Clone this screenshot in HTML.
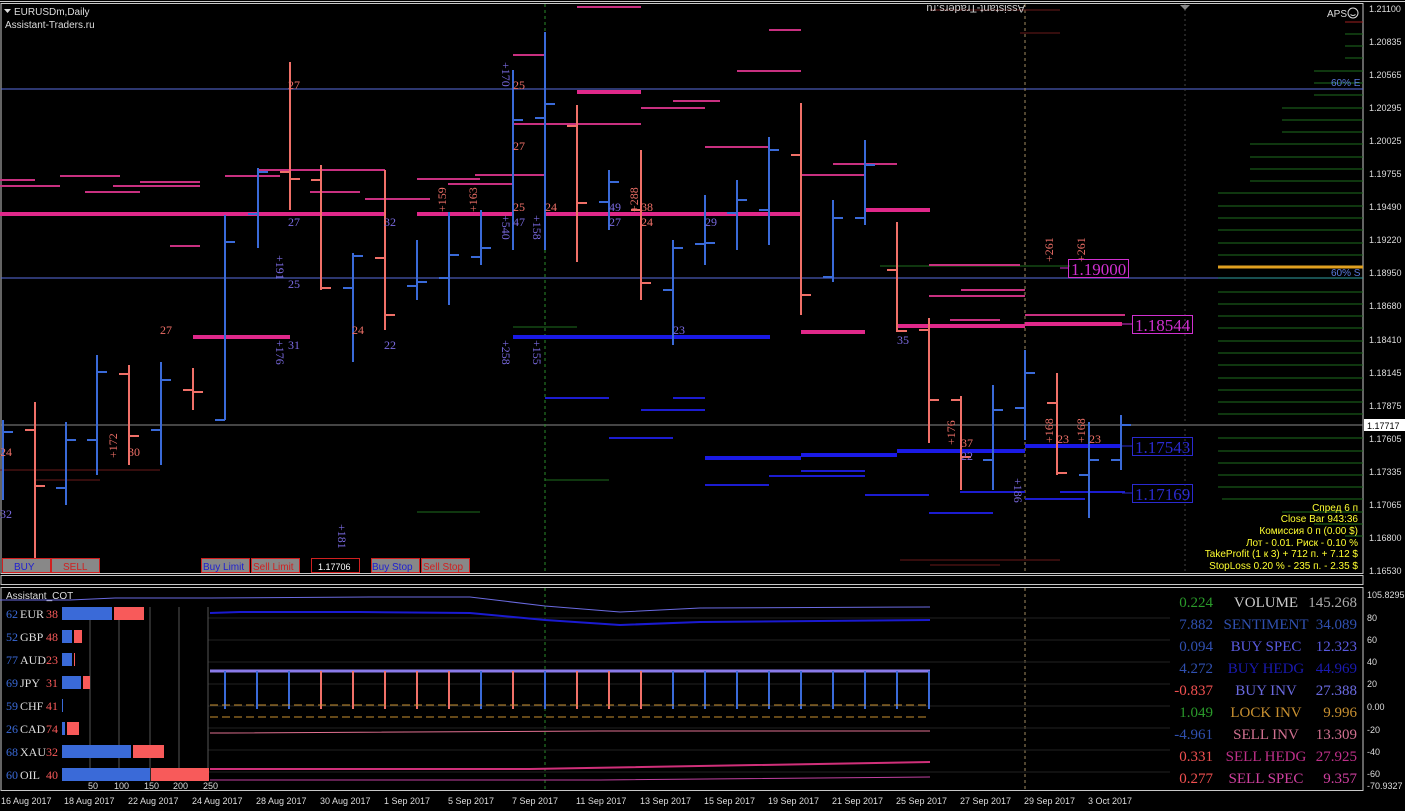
<!DOCTYPE html>
<html><head><meta charset="utf-8"><style>
html,body{margin:0;padding:0;background:#000;width:1405px;height:811px;overflow:hidden}
svg{display:block}
</style></head><body>
<svg width="1405" height="811" viewBox="0 0 1405 811" xmlns="http://www.w3.org/2000/svg" font-family="Liberation Sans, sans-serif">
<rect width="1405" height="811" fill="#000"/>
<rect x="1" y="3.5" width="1362" height="570" fill="none" stroke="#c8c8c8" stroke-width="1"/>
<rect x="1" y="575.5" width="1362" height="9" fill="none" stroke="#c8c8c8"/>
<rect x="1" y="587.5" width="1362" height="203" fill="none" stroke="#c8c8c8"/>
<line x1="0" y1="1.5" x2="1405" y2="1.5" stroke="#c8c8c8"/>
<line x1="1" y1="89" x2="1363" y2="89" stroke="#5a6ee0"/>
<line x1="1" y1="278" x2="1363" y2="278" stroke="#5a6ee0"/>
<line x1="1" y1="425" x2="1363" y2="425" stroke="#8a8a8a"/>
<line x1="545" y1="4" x2="545" y2="573" stroke="#2a8a2a" stroke-dasharray="3,3"/>
<line x1="1025" y1="4" x2="1025" y2="573" stroke="#a08a60" stroke-dasharray="3,3"/>
<line x1="1185" y1="4" x2="1185" y2="573" stroke="#444" stroke-dasharray="2,3"/>
<line x1="545" y1="588" x2="545" y2="790" stroke="#2a8a2a" stroke-dasharray="3,3"/>
<line x1="1025" y1="588" x2="1025" y2="790" stroke="#a08a60" stroke-dasharray="3,3"/>
<g stroke="#1e6e1e">
<path d="M1345 34H1363M1345 46H1363M1345 58H1363M1314 71H1363M1314 83H1363M1314 95H1363M1282 108H1363M1282 120H1363M1282 132H1363M1250 144H1363M1250 157H1363M1250 169H1363M1250 181H1363M1218 193H1363M1218 206H1363M1218 218H1363M1218 230H1363M1218 243H1363M1218 255H1363M1218 292H1363M1218 304H1363M1218 316H1363M1218 328H1363M1218 341H1363M1218 353H1363M1218 365H1363M1218 378H1363M1218 390H1363M1218 402H1363M1218 414H1363M1218 438H1363M1218 451H1363M1218 463H1363M1218 475H1363M1218 487H1363M1222 499H1363M1282 512H1363M1314 524H1363M1345 536H1363"/>
<path d="M417 512H480M513 327H577M545 480H609M880 266H1070"/>
</g>
<line x1="1218" y1="267" x2="1363" y2="267" stroke="#e0a020" stroke-width="3"/>
<line x1="1218" y1="278" x2="1363" y2="278" stroke="#30a0a0"/>
<line x1="1345" y1="22" x2="1363" y2="22" stroke="#a02020"/>
<text x="1331" y="86" font-size="10" fill="#5a7ae0">60% E</text>
<text x="1331" y="276" font-size="10" fill="#5a7ae0">60% S</text>
<g stroke="#6a1a1a"><path d="M0 470H160M35 480H100M930 10H1060M1020 33H1060M900 560H1060M930 565H1000"/></g>
<g stroke="#c83080" stroke-width="2">
<path d="M0 180H35M0 186H60M60 176H120M85 192H140M113 186H200M140 182H200M170 246H200M225 176H280M258 170H310M290 170H385M310 192H360M365 199H430M417 179H480M448 184H513M475 175H545M513 55H545M513 124H609M545 124H641M577 7H641M641 108H705M673 101H720M705 147H769M737 71H801M769 30H801M801 175H865M833 164H897M929 296H1025M961 290H1025M1025 315H1125M929 265H1020M950 320H1000"/>
</g>
<g stroke="#e0288a" stroke-width="4">
<path d="M0 214H227M225 214H385M417 214H513M545 214H641M641 214H801M865 210H930M577 92H641M193 337H290M801 332H865M897 326H1025M1025 324H1122"/>
</g>
<g stroke="#1a1ae6" stroke-width="4">
<path d="M513 337H770M705 458H801M801 455H897M897 451H1025M1025 446H1122"/>
</g>
<g stroke="#1c1cd0" stroke-width="2">
<path d="M545 398H609M641 410H705M609 438H673M673 398H705M705 485H769M769 476H865M865 495H929M929 513H993M960 492H1025M1025 499H1085M1060 492H1125M801 471H865"/>
</g>
<g stroke="#3a6ad8" stroke-width="2" fill="none">
<path d="M3 420V500M3 432H13M66 422V505M56 488H66M66 440H76M97 355V475M97 440H87M97 372H107M161 362V465M151 430H161M161 380H171M225 215V420M215 420H225M225 242H235M258 168V248M248 214H258M258 172H268M353 253V362M343 288H353M353 256H363M417 240V300M407 286H417M417 282H427M449 212V305M439 278H449M449 255H459M481 210V265M471 257H481M481 248H491M513 70V250M513 120H523M545 32V250M535 118H545M545 104H555M609 170V230M599 202H609M609 182H619M673 240V345M663 290H673M673 248H683M705 195V265M695 244H705M705 243H715M737 180V250M727 213H737M737 200H747M769 137V245M759 210H769M769 150H779M833 200V282M823 277H833M833 218H843M865 140V225M855 218H865M865 165H875M993 385V490M983 460H993M993 410H1003M1025 350V440M1015 408H1025M1025 373H1035M1089 422V518M1079 475H1089M1089 460H1099M1121 415V470M1111 460H1121M1121 425H1131"/>
</g>
<g stroke="#f07068" stroke-width="2" fill="none">
<path d="M35 402V560M25 430H35M35 486H45M129 365V465M119 374H129M129 436H139M193 368V410M183 390H193M193 392H203M290 62V210M280 172H290M290 179H300M321 165V290M311 180H321M321 288H331M385 170V330M375 258H385M385 315H395M577 105V262M567 126H577M577 203H587M641 150V300M631 210H641M641 283H651M801 103V315M791 155H801M801 295H811M897 222V332M887 270H897M897 331H907M929 318V443M919 330H929M929 400H939M961 396V490M951 400H961M961 457H971M1057 373V475M1047 403H1057M1057 473H1067"/>
</g>
<g font-size="12" font-family="Liberation Serif, serif">
<text x="0" y="456" fill="#f07068">24</text>
<text x="0" y="518" fill="#7a6ae0">32</text>
<text x="128" y="456" fill="#f07068">30</text>
<text x="160" y="334" fill="#f07068">27</text>
<text x="288" y="89" fill="#f07068">27</text>
<text x="288" y="226" fill="#7a6ae0">27</text>
<text x="288" y="288" fill="#7a6ae0">25</text>
<text x="288" y="349" fill="#7a6ae0">31</text>
<text x="352" y="334" fill="#f07068">24</text>
<text x="384" y="226" fill="#7a6ae0">32</text>
<text x="384" y="349" fill="#7a6ae0">22</text>
<text x="513" y="89" fill="#f07068">25</text>
<text x="513" y="150" fill="#f07068">27</text>
<text x="513" y="211" fill="#f07068">25</text>
<text x="513" y="226" fill="#7a6ae0">47</text>
<text x="545" y="211" fill="#f07068">24</text>
<text x="609" y="211" fill="#7a6ae0">49</text>
<text x="609" y="226" fill="#7a6ae0">27</text>
<text x="641" y="211" fill="#f07068">38</text>
<text x="641" y="226" fill="#f07068">24</text>
<text x="673" y="334" fill="#7a6ae0">23</text>
<text x="705" y="226" fill="#7a6ae0">29</text>
<text x="897" y="344" fill="#7a6ae0">35</text>
<text x="961" y="447" fill="#f07068">37</text>
<text x="961" y="460" fill="#7a6ae0">22</text>
<text x="1057" y="443" fill="#f07068">23</text>
<text x="1089" y="443" fill="#f07068">23</text>
</g>
<g font-size="12" font-family="Liberation Serif, serif" fill="#7a6ae0">
<text transform="translate(117,458) rotate(-90)" fill="#f07068">+172</text>
<text transform="translate(276,255) rotate(90)">+191</text>
<text transform="translate(276,340) rotate(90)">+176</text>
<text transform="translate(338,524) rotate(90)">+181</text>
<text transform="translate(446,212) rotate(-90)" fill="#f07068">+159</text>
<text transform="translate(477,212) rotate(-90)" fill="#f07068">+163</text>
<text transform="translate(502,62) rotate(90)">+170</text>
<text transform="translate(502,215) rotate(90)">+540</text>
<text transform="translate(533,215) rotate(90)">+158</text>
<text transform="translate(502,340) rotate(90)">+258</text>
<text transform="translate(533,340) rotate(90)">+155</text>
<text transform="translate(638,212) rotate(-90)" fill="#f07068">+288</text>
<text transform="translate(955,445) rotate(-90)" fill="#f07068">+176</text>
<text transform="translate(1014,478) rotate(90)">+186</text>
<text transform="translate(1053,443) rotate(-90)" fill="#f07068">+168</text>
<text transform="translate(1053,262) rotate(-90)" fill="#f07068">+261</text>
<text transform="translate(1085,443) rotate(-90)" fill="#f07068">+168</text>
<text transform="translate(1085,262) rotate(-90)" fill="#f07068">+261</text>
</g>
<g font-size="17" font-family="Liberation Serif, serif">
<line x1="1060" y1="268" x2="1068" y2="268" stroke="#d030d0"/>
<rect x="1068.5" y="259.5" width="60" height="18" fill="none" stroke="#d030d0"/>
<text x="1071" y="275" fill="#d030d0">1.19000</text>
<line x1="1122" y1="324" x2="1132" y2="324" stroke="#d030d0"/>
<rect x="1132.5" y="315.5" width="60" height="18" fill="none" stroke="#d030d0"/>
<text x="1135" y="331" fill="#d030d0">1.18544</text>
<line x1="1122" y1="446" x2="1132" y2="446" stroke="#2a2ad0"/>
<rect x="1132.5" y="437.5" width="60" height="18" fill="none" stroke="#2a2ad0"/>
<text x="1135" y="453" fill="#2a2ad0">1.17543</text>
<line x1="1122" y1="493" x2="1132" y2="493" stroke="#2a2ad0"/>
<rect x="1132.5" y="484.5" width="60" height="18" fill="none" stroke="#2a2ad0"/>
<text x="1135" y="500" fill="#2a2ad0">1.17169</text>
</g>
<path d="M4 9h7l-3.5 4z" fill="#ddd"/>
<text x="14" y="15" font-size="10" fill="#ddd">EURUSDm,Daily</text>
<text x="5" y="28" font-size="10" fill="#ddd">Assistant-Traders.ru</text>
<text x="1095" y="13" font-size="11" fill="#ccc" transform="rotate(180 1060 9)">Assistant-Traders.ru</text>
<path d="M1180 5h10l-5 5z" fill="#888"/>
<text x="1327" y="17" font-size="10" fill="#ddd">APS</text>
<circle cx="1353" cy="13" r="5" fill="none" stroke="#ddd"/>
<path d="M1350.5 14.5q2.5 2 5 0" stroke="#ddd" fill="none"/>
<g font-size="10" fill="#ffff30" text-anchor="end">
<text x="1358" y="511">Спред 6 п</text>
<text x="1358" y="522">Close Bar    943:36</text>
<text x="1358" y="534">Комиссия 0 п (0.00 $)</text>
<text x="1358" y="546">Лот - 0.01. Риск - 0.10 %</text>
<text x="1358" y="557">TakeProfit (1 к 3) + 712 п. + 7.12 $</text>
<text x="1358" y="569">StopLoss 0.20 % - 235 п. - 2.35 $</text>
</g>
<g font-size="9" fill="#ddd">
<text x="1369" y="12">1.21100</text><text x="1369" y="45">1.20835</text><text x="1369" y="78">1.20565</text><text x="1369" y="111">1.20295</text><text x="1369" y="144">1.20025</text><text x="1369" y="177">1.19755</text><text x="1369" y="210">1.19490</text><text x="1369" y="243">1.19220</text><text x="1369" y="276">1.18950</text><text x="1369" y="309">1.18680</text><text x="1369" y="343">1.18410</text><text x="1369" y="376">1.18145</text><text x="1369" y="409">1.17875</text><text x="1369" y="442">1.17605</text><text x="1369" y="475">1.17335</text><text x="1369" y="508">1.17065</text><text x="1369" y="541">1.16800</text><text x="1369" y="574">1.16530</text>
</g>
<rect x="1364" y="419" width="41" height="12" fill="#fff"/>
<text x="1367" y="429" font-size="9" fill="#000">1.17717</text>
<g font-size="10">
<rect x="2.5" y="558.5" width="48" height="14" fill="#888" stroke="#d02020"/><text x="14" y="570" fill="#2020d0">BUY</text>
<rect x="51.5" y="558.5" width="48" height="14" fill="#888" stroke="#d02020"/><text x="63" y="570" fill="#d02020">SELL</text>
<rect x="201.5" y="558.5" width="48" height="14" fill="#888" stroke="#d02020"/><text x="203" y="570" fill="#2020d0">Buy Limit</text>
<rect x="251.5" y="558.5" width="48" height="14" fill="#888" stroke="#d02020"/><text x="253" y="570" fill="#d02020">Sell Limit</text>
<rect x="311.5" y="558.5" width="48" height="14" fill="#000" stroke="#d02020"/><text x="318" y="570" fill="#fff" font-size="9">1.17706</text>
<rect x="371.5" y="558.5" width="48" height="14" fill="#888" stroke="#d02020"/><text x="372" y="570" fill="#2020d0">Buy Stop</text>
<rect x="421.5" y="558.5" width="48" height="14" fill="#888" stroke="#d02020"/><text x="423" y="570" fill="#d02020">Sell Stop</text>
</g>
<text x="6" y="599" font-size="10" fill="#ddd">Assistant_COT</text>
<g stroke="#222"><path d="M208 618H1170M208 640H1170M208 662H1170M208 684H1170M208 706H1170M208 728H1170M208 750H1170M208 772H1170"/></g>
<g stroke="#555"><path d="M90 607V781M119 607V781M150 607V781M179 607V781M208 607V781"/></g>
<path d="M0 600H70L115 598H210L370 597H470L545 606L620 612L700 608L930 607" stroke="#6a6ae0" fill="none"/>
<path d="M210 613L240 612L360 612L470 613L545 620L620 625L700 622L930 620" stroke="#1a1ad0" stroke-width="2" fill="none"/>
<line x1="210" y1="671" x2="930" y2="671" stroke="#8a7ae8" stroke-width="3"/>
<g stroke-width="2">
<path d="M225 671V709M257 671V709M289 671V709M481 671V709M545 671V709M673 671V709M705 671V709M737 671V709M769 671V709M801 671V709M833 671V709M865 671V709M897 671V709M929 671V709" stroke="#3a6ad8"/>
<path d="M321 671V709M353 671V709M385 671V709M417 671V709M449 671V709M513 671V709M577 671V709M609 671V709M641 671V709" stroke="#f07068"/>
</g>
<path d="M210 705H930M210 717H930" stroke="#c89030" stroke-dasharray="8,4"/>
<path d="M210 733H225L600 731H930" stroke="#e07090" fill="none"/>
<path d="M210 769H530L930 762" stroke="#d0307a" stroke-width="2" fill="none"/>
<path d="M210 780H600L930 777" stroke="#c040a0" fill="none"/>
<g font-size="12" font-family="Liberation Serif, serif">
<g fill="#3a6ad8">
<rect x="62" y="607" width="50" height="13"/><rect x="62" y="630" width="10" height="13"/><rect x="62" y="653" width="10" height="13"/><rect x="62" y="676" width="19" height="13"/><rect x="62" y="699" width="1" height="13"/><rect x="62" y="722" width="3" height="13"/><rect x="62" y="745" width="69" height="13"/><rect x="62" y="768" width="88" height="13"/>
</g>
<g fill="#f85a5a">
<rect x="114" y="607" width="30" height="13"/><rect x="74" y="630" width="8" height="13"/><rect x="74" y="653" width="1" height="13"/><rect x="83" y="676" width="7" height="13"/><rect x="67" y="722" width="12" height="13"/><rect x="133" y="745" width="31" height="13"/><rect x="151" y="768" width="58" height="13"/>
</g>
<g fill="#3a6ad8"><text x="6" y="618">62</text><text x="6" y="641">52</text><text x="6" y="664">77</text><text x="6" y="687">69</text><text x="6" y="710">59</text><text x="6" y="733">26</text><text x="6" y="756">68</text><text x="6" y="779">60</text></g>
<g fill="#ddd" textLength="22"><text x="20" y="618">EUR</text><text x="20" y="641">GBP</text><text x="20" y="664">AUD</text><text x="20" y="687">JPY</text><text x="20" y="710">CHF</text><text x="20" y="733">CAD</text><text x="20" y="756">XAU</text><text x="20" y="779">OIL</text></g>
<g fill="#f85a5a" text-anchor="end"><text x="58" y="618">38</text><text x="58" y="641">48</text><text x="58" y="664">23</text><text x="58" y="687">31</text><text x="58" y="710">41</text><text x="58" y="733">74</text><text x="58" y="756">32</text><text x="58" y="779">40</text></g>
</g>
<g font-size="9" fill="#ddd"><text x="88" y="789">50</text><text x="114" y="789">100</text><text x="144" y="789">150</text><text x="173" y="789">200</text><text x="203" y="789">250</text></g>
<g font-size="15" font-family="Liberation Serif, serif">
<g text-anchor="end">
<text x="1213" y="607" fill="#2a9a2a">0.224</text>
<text x="1213" y="629" fill="#3050b0">7.882</text>
<text x="1213" y="651" fill="#3050b0">0.094</text>
<text x="1213" y="673" fill="#3050b0">4.272</text>
<text x="1213" y="695" fill="#f05050">-0.837</text>
<text x="1213" y="717" fill="#2a9a2a">1.049</text>
<text x="1213" y="739" fill="#3050b0">-4.961</text>
<text x="1213" y="761" fill="#f05050">0.331</text>
<text x="1213" y="783" fill="#f05050">0.277</text>
<text x="1357" y="607" fill="#aaa">145.268</text>
<text x="1357" y="629" fill="#3050b0">34.089</text>
<text x="1357" y="651" fill="#5a5ae0">12.323</text>
<text x="1357" y="673" fill="#1a1ab0">44.969</text>
<text x="1357" y="695" fill="#6a6ae0">27.388</text>
<text x="1357" y="717" fill="#c89030">9.996</text>
<text x="1357" y="739" fill="#d07090">13.309</text>
<text x="1357" y="761" fill="#c0308a">27.925</text>
<text x="1357" y="783" fill="#d040a0">9.357</text>
</g>
<g text-anchor="middle">
<text x="1266" y="607" fill="#ccc">VOLUME</text>
<text x="1266" y="629" fill="#3050b0">SENTIMENT</text>
<text x="1266" y="651" fill="#5a5ae0">BUY SPEC</text>
<text x="1266" y="673" fill="#1a1ab0">BUY HEDG</text>
<text x="1266" y="695" fill="#6a6ae0">BUY INV</text>
<text x="1266" y="717" fill="#c89030">LOCK INV</text>
<text x="1266" y="739" fill="#d07090">SELL INV</text>
<text x="1266" y="761" fill="#c0308a">SELL HEDG</text>
<text x="1266" y="783" fill="#d040a0">SELL SPEC</text>
</g>
</g>
<g font-size="9" fill="#ddd">
<text x="1367" y="598">105.8295</text><text x="1367" y="621">80</text><text x="1367" y="643">60</text><text x="1367" y="665">40</text><text x="1367" y="687">20</text><text x="1367" y="710">0.00</text><text x="1367" y="733">-20</text><text x="1367" y="755">-40</text><text x="1367" y="777">-60</text><text x="1367" y="789">-70.9327</text>
</g>
<g font-size="9" fill="#ddd">
<text x="1" y="804">16 Aug 2017</text><text x="64" y="804">18 Aug 2017</text><text x="128" y="804">22 Aug 2017</text><text x="192" y="804">24 Aug 2017</text><text x="256" y="804">28 Aug 2017</text><text x="320" y="804">30 Aug 2017</text><text x="384" y="804">1 Sep 2017</text><text x="448" y="804">5 Sep 2017</text><text x="512" y="804">7 Sep 2017</text><text x="576" y="804">11 Sep 2017</text><text x="640" y="804">13 Sep 2017</text><text x="704" y="804">15 Sep 2017</text><text x="768" y="804">19 Sep 2017</text><text x="832" y="804">21 Sep 2017</text><text x="896" y="804">25 Sep 2017</text><text x="960" y="804">27 Sep 2017</text><text x="1024" y="804">29 Sep 2017</text><text x="1088" y="804">3 Oct 2017</text>
</g>
</svg>
</body></html>
